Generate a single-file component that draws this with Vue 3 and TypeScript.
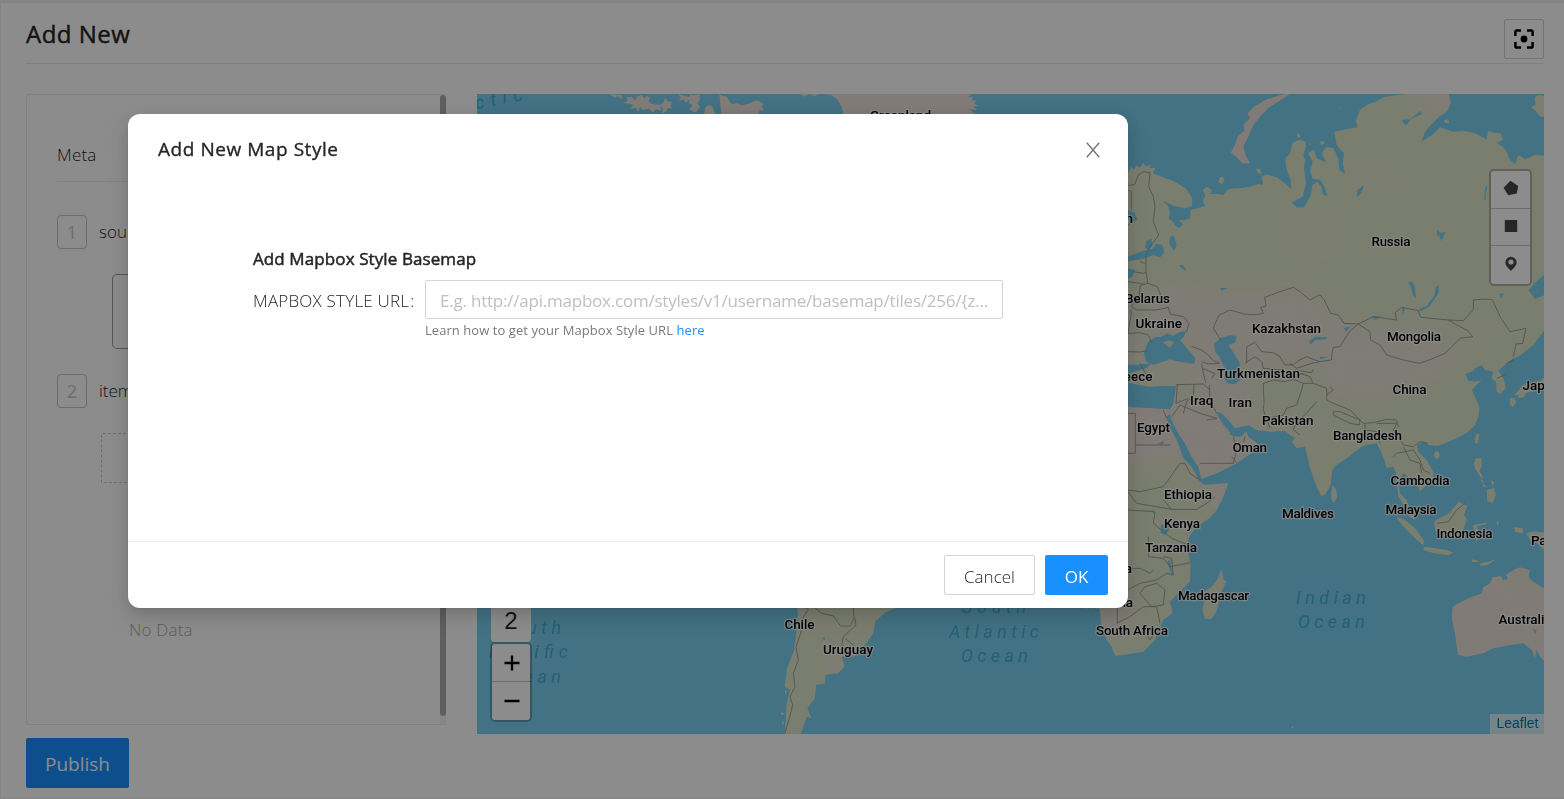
<script setup lang="ts">
interface MapLabel {
  text: string
  x: number
  y: number
  w: number
}

const countries: MapLabel[] = [
  { text: 'Russia', x: 1371.5, y: 246.4, w: 39 },
  { text: 'Belarus', x: 1125, y: 303.4, w: 45 },
  { text: 'Sweden', x: 1085, y: 223, w: 48 },
  { text: 'Ukraine', x: 1135.5, y: 328, w: 46.5 },
  { text: 'Kazakhstan', x: 1252, y: 333.4, w: 69 },
  { text: 'Mongolia', x: 1387, y: 341, w: 54 },
  { text: 'Greece', x: 1110, y: 381, w: 42.5 },
  { text: 'Turkmenistan', x: 1217, y: 378, w: 83 },
  { text: 'China', x: 1392.5, y: 394.4, w: 34 },
  { text: 'Japan', x: 1522.5, y: 390.4, w: 37 },
  { text: 'Iraq', x: 1190, y: 405, w: 23.5 },
  { text: 'Iran', x: 1228.5, y: 407, w: 23.5 },
  { text: 'Pakistan', x: 1262, y: 425, w: 51.5 },
  { text: 'Egypt', x: 1137, y: 432, w: 33 },
  { text: 'Bangladesh', x: 1333, y: 440.4, w: 69 },
  { text: 'Oman', x: 1232.5, y: 452, w: 34.5 },
  { text: 'Cambodia', x: 1390.5, y: 485, w: 59 },
  { text: 'Ethiopia', x: 1164, y: 499, w: 48 },
  { text: 'Malaysia', x: 1385.5, y: 514, w: 51 },
  { text: 'Maldives', x: 1282, y: 518, w: 52 },
  { text: 'Kenya', x: 1164, y: 528, w: 36 },
  { text: 'Indonesia', x: 1436.5, y: 538, w: 56 },
  { text: 'Papua', x: 1531, y: 545, w: 37 },
  { text: 'Tanzania', x: 1145, y: 552, w: 52 },
  { text: 'Angola', x: 1089, y: 573, w: 43 },
  { text: 'Madagascar', x: 1178, y: 600, w: 71 },
  { text: 'Namibia', x: 1085, y: 607, w: 48 },
  { text: 'Australia', x: 1498.5, y: 624.4, w: 53 },
  { text: 'South Africa', x: 1096, y: 635, w: 72 },
  { text: 'Chile', x: 784.5, y: 629, w: 30 },
  { text: 'Uruguay', x: 823, y: 654, w: 50 },
  { text: 'Greenland', x: 870, y: 120.4, w: 61 },
]

const oceans: MapLabel[] = [
  { text: 'Indian', x: 1296, y: 604.4, w: 70 },
  { text: 'Ocean', x: 1298, y: 628.4, w: 67 },
  { text: 'South', x: 962, y: 613, w: 64 },
  { text: 'Atlantic', x: 949, y: 638, w: 90 },
  { text: 'Ocean', x: 961, y: 662, w: 67 },
  { text: 'South', x: 498, y: 634, w: 63 },
  { text: 'Pacific', x: 489, y: 658, w: 79 },
  { text: 'Ocean', x: 494, y: 683, w: 67 },
]
</script>

<template>
  <div class="page">
    <header class="page-head">
      <h1>Add New</h1>
      <button class="full-btn" aria-label="Fullscreen">
        <svg width="22" height="22" viewBox="0 0 22 22">
          <path d="M2.400 8V3.800a1.400 1.400 0 0 1 1.400-1.400H8M14 2.400h4.200a1.400 1.400 0 0 1 1.400 1.400V8M19.600 14v4.200a1.400 1.400 0 0 1-1.400 1.400H14M8 19.600H3.800a1.400 1.400 0 0 1-1.400-1.400V14" fill="none" stroke="#000" stroke-width="2.500" />
          <circle cx="11" cy="11" r="3.400" />
        </svg>
      </button>
    </header>

    <main class="content">
      <section class="panel">
        <div class="panel-body">
          <div class="tab">Meta</div>
          <div class="row"><span class="num">1</span><span class="name">source</span></div>
          <div class="source-box"></div>
          <div class="row second"><span class="num">2</span><span class="name">items</span></div>
          <div class="drop-box"></div>
          <div class="no-data">No Data</div>
        </div>
        <div class="track"><div class="thumb"></div></div>
      </section>

      <section class="map">
        <svg class="world" width="1067" height="640" viewBox="477 94 1067 640">
          <defs>
            <filter id="soft" x="-30%" y="-30%" width="160%" height="160%"><feGaussianBlur stdDeviation="24" /></filter>
            <clipPath id="mainland">
              <path d="M-120 240L10 262 24 250 34 230 42 240 50 226 60 234 70 218 78 230 92 222 90 234 106 234 99 250 130 262 165 275 200 298 217 325 216 348 195 355 160 347 130 332 146 352 150 368 146 385 160 395 166 408 180 413 188 402 176 390 195 390 210 384 212 360 235 354 257 347 248 332 256 318 248 300 262 290 276 300 270 312 292 312 310 314 325 298 345 295 365 294 390 290 415 282 430 285 424 262 440 253 470 262 495 280 513 297 512 270 500 240 496 205 510 190 518 158 535 150 555 153 558 170 550 195 556 212 552 230 558 280 548 320 515 338 530 352 552 352 570 320 578 284 592 276 604 290 608 313 622 318 614 290 600 270 578 266 570 240 578 215 565 190 582 178 590 205 618 217 605 190 620 170 640 175 655 205 658 240 675 252 668 218 672 190 650 165 643 125 680 118 712 112 708 90 720 60 745 42 765 36 790 22 830 15 880 10 985 10 992 40 982 64 955 82 930 108 915 126 905 155 940 132 960 112 1000 125 1030 122 1065 130 1100 148 1105 122 1120 128 1142 130 1150 150 1130 158 1150 172 1162 188 1168 208 1185 222 1195 195 1215 208 1245 195 1280 198 1280 548 1250 573 1226 600 1245 627 1280 612 1280 712 1240 765 1195 800 1180 805 1160 820 1135 842 1150 865 1158 895 1140 912 1130 905 1128 875 1115 865 1120 845 1095 840 1085 825 1065 835 1060 842 1036 853 1045 872 1065 875 1085 870 1070 884 1056 900 1065 920 1078 950 1075 980 1065 1005 1045 1025 1010 1045 975 1060 955 1068 925 1065 910 1055 890 1065 895 1085 920 1110 942 1150 935 1175 910 1195 900 1205 895 1190 880 1175 850 1150 835 1175 840 1210 860 1230 875 1268 885 1290 868 1280 850 1245 836 1220 830 1180 828 1150 820 1130 800 1134 795 1115 785 1090 770 1060 740 1065 725 1070 700 1090 680 1105 650 1125 637 1140 632 1185 615 1215 603 1217 590 1190 570 1135 555 1070 530 1075 515 1055 525 1045 510 1035 495 1023 450 1025 410 1020 385 1005 345 1015 325 990 305 970 290 965 295 980 310 1005 325 1020 330 1035 345 1040 365 1040 378 1025 385 1040 405 1055 415 1065 400 1085 350 1120 300 1145 245 1167 240 1150 235 1130 215 1100 195 1060 175 1030 155 990 150 970 138 980 150 1015 170 1050 190 1105 215 1130 240 1175 255 1185 325 1180 310 1220 290 1260 270 1284 230 1310 207 1340 203 1380 212 1420 210 1475 175 1510 150 1535 158 1570 130 1590 120 1615 105 1650 70 1685 30 1692 -15 1698 -25 1670 -40 1650 -55 1615 -60 1560 -90 1520 -120 1300Z" />
            </clipPath>
            <clipPath id="australia">
              <path d="M998 1550L1015 1540 1045 1525 1085 1510 1090 1492 1110 1480 1118 1462 1142 1458 1150 1470 1164 1468 1158 1454 1172 1445 1184 1438 1200 1432 1230 1440 1225 1460 1240 1475 1280 1500 1280 1722 1260 1700 1250 1680 1245 1705 1235 1680 1210 1660 1170 1665 1120 1675 1090 1690 1040 1700 1015 1695 1010 1670 1005 1630 995 1585Z" />
            </clipPath>
          </defs>
          <rect x="477" y="94" width="1067" height="640" class="water" />

          <g transform="translate(1120 90) scale(.33333)">
            <g clip-path="url(#mainland)">
              <rect x="-150" width="1450" height="1750" class="green" />
              <g class="sand" filter="url(#soft)">
                <ellipse cx="580" cy="445" rx="80" ry="65" opacity=".3" />
                <ellipse cx="750" cy="275" rx="100" ry="35" opacity=".2" />
                <path d="M160 560L300 600 560 600 700 700 900 720 1040 770 980 860 780 930 640 920 560 820 400 850 430 1030 240 1000 200 770 60 690Z" opacity=".65" />
                <path d="M640 810L820 800 960 830 840 900 680 920ZM1040 680L1120 720 1060 770ZM480 610L590 640 600 700 520 700Z" opacity=".5" />
                <path d="M-80 900L150 910 260 980 460 1050 370 1140 240 1160 150 1090 -80 1160Z" />
                <path d="M-100 690L50 640 260 860 100 880-100 850Z" opacity=".5" />
                <path d="M480 980L620 1000 600 1140 540 1080Z" opacity=".5" />
                <ellipse cx="950" cy="20" rx="70" ry="50" opacity=".8" />
                <path d="M-100 1480L60 1510 20 1640-100 1620Z" opacity=".7" />
                <ellipse cx="290" cy="1200" rx="35" ry="60" />
              </g>
            </g>
            <g clip-path="url(#australia)">
              <rect x="980" y="1400" width="320" height="340" class="sand" />
              <path d="M1120 1490L1280 1440V1500H1180Z" class="green" filter="url(#soft)" opacity=".6" />
            </g>

            <!-- islands -->
            <path class="sand" d="M505 8L440 28 402 50 382 70 390 85 370 105 374 120 352 140 345 165 332 188 350 202 366 220 390 220 378 198 370 170 386 138 400 105 420 80 445 53 475 35 515 8Z" />
            <path class="green" d="M298 262l10-2 6 10-8 12-10-4ZM408 236l10 0 8 14-10 2ZM530 132l8-2 4 10-8 4ZM972 90l12-2 4 10-12 2ZM1245 22l12-8 23 6v60l-20 0-12-16-14-12 12-8ZM568 160l8 2-4 8ZM598 155l12-2 4 8-10 4ZM655 52l4-2 2 6Z" />
            <path class="green" d="M638 1186l10 10 4 26-10 16-8-10 0-22ZM945 1084l12 2 2 14-10 8-8-10ZM1070 1030l8 2-4 28-8 0-2-14ZM1066 1106l18-2 2 24-8 14 14 22-10-2-16-24-4-16ZM1080 1160l10 14-4 4ZM1100 1200l22-6 6 22-10 24-16-6ZM1088 1180l12 10-10 2ZM1112 1170l10 6-4 14ZM1170 924l14 0 4 14-10 14-8-8ZM1192 910l26 0-6 12-16 2ZM1184 914l26-30 50-12 20-14v28l-40 18-50 12Z" />
            <path class="green" d="M832 1282l20 6 36 30 24 34-2 14-22-18-38-38-20-26ZM912 1370l30 4 36 6 22 8-16 8-42-6-32-10ZM944 1292l40-20 34-38 8 6 16 8-10 26 8 14-8 26-18 30-30-2-34-10-6-20ZM1060 1306l38-8 4 4-30 6 4 14 14 10-12 0-10 28 0-30-8-14ZM1056 1408l20 4-2 4-18 0ZM1080 1420l22-4 26-8-22 16-24 4ZM1182 1312l26 2 2 16-24-4ZM1130 1298l6-6-2 20ZM1220 1330l20-6 40 4v60l-26-26-22-10-12-18Z" />
            <path class="green" d="M305 1440l6 30 8 4-14 30-16 62-16 22-18-2-8-26 6-28-2-26 24-16 18-24 6-18Z" />
            <path class="green" d="M517 1907l5 6-9 1Z" />

            <!-- seas and lakes -->
            <path class="water" d="M84 755L105 742 125 740 142 730 158 738 176 728 198 722 192 740 180 750 200 775 226 805 222 822 170 814 150 808 130 815 100 824 78 814 72 790ZM282 762L300 745 330 736 350 738 345 758 325 765 345 795 360 820 355 850 362 868 345 883 322 880 312 862 314 835 298 800 286 785ZM-30 820L40 825 95 820 78 835 28 850 30 880 85 890 125 888 168 888 160 940 150 958 100 955 40 952-60 940Z" />
            <path class="land" d="M128 757l20-6 14 6-12 16Z" />
            <path class="water" d="M24 360l20 8 8 20-28 20ZM24 500l40-16 34-8 10-14 18 2 8 24-14 14-20-6-30 10-46 8ZM80 452l14-6 4 22-14 12-10-8ZM150 440l10-4 10 30-8 16-14-20ZM176 524l14 2 10 16-14-6ZM24 535l22 6-10 20-12 6ZM895 658l24-10 24-30 4-28 10-4-2 26-26 36-26 16ZM864 578l10-4 10 12 4 40-10-12-6-26ZM566 754l20-14 36 2-2 6-34 2-14 14ZM952 420l10 8 14-2-8 20-4 8-6-16-8-2ZM712 300l20-14-8 22-12 14ZM846 90l24-2 32-26 4 10-34 16-12 18-10-6ZM565 178l10-20 10 14-2 10ZM1096 290l6-2-6 30 2 16-6-8ZM670 714l22-4-14 14ZM755 678l30 2-22 10ZM845 650l10 4-6 22ZM1138 610l14 2-10 12ZM600 800l24 2-24 6ZM300 594l22 0-16 8ZM112 1062l20-10-4 12ZM122 1306l24-6 0 22-10 14-14-8ZM142 1416l8-6 8 40-2 10ZM160 1290l6 14-4 4ZM98 1250l4 22-4-4ZM1238 1618l12 2-4 12Z" />

            <!-- borders -->
            <g class="border">
              <path d="M24 286L44 284 55 255 70 245 90 248 86 290 100 320 105 350 100 395 116 435 90 470 78 495 78 545 84 580M24 300L34 304V360M24 575L50 578 70 584 84 580 112 590 122 615M60 588L58 620 34 650 50 660 110 660 145 652 150 672 190 680 207 700 200 725M32 660L34 670 24 730 60 728 84 734 96 760M24 785L60 786 84 782M40 545L70 550 78 548M60 515L74 520M60 590L70 580M85 865L60 820M245 815L265 822 300 820M215 770L240 778 262 792 280 812 298 818M246 835L285 850 275 865M245 820L250 850 258 880M168 884L250 882 270 900M172 884L168 940 205 925M222 882L220 920 200 935 190 970M268 885L270 930 290 970M155 980L180 945 240 970 290 985" />
              <path d="M290 690L298 675 330 660 372 672 405 674 430 670 422 652 438 648 434 622 480 605 520 592 540 605 570 630 600 614 612 628 632 670 655 675 672 700 715 702 688 725 660 770 640 772 636 790 634 810 598 815 560 800 535 812 520 825 495 825 478 798 460 788 425 785 405 757 380 770M380 770V816M290 690L280 715 305 755M715 702L760 680 830 690 825 668 845 652 895 662 902 682 985 690 1010 705 1040 720 1058 740 1020 745 975 790 940 805 900 820 850 810 800 795 780 765 752 750 750 725 715 702M985 690L1030 692 1060 660 1060 630 1095 627 1118 630 1140 680 1170 725 1218 715 1208 760 1188 762 1180 800M1180 810L1160 820M1130 865L1155 855" />
              <path d="M375 820L405 800 425 815 430 835 485 840 525 860 550 850M430 880L432 940 430 960 440 985 450 1015M430 880L460 870 495 875 520 868 550 880 545 900 530 945 500 955 490 975 440 985M550 880L580 880 620 895 620 930 640 940 690 960 730 1000 760 998 800 988 830 990 835 1010M540 850L570 860 578 878M540 1035L520 1020 530 995 560 970 590 935M640 965L660 965 720 990 718 1005 690 1000 640 975ZM735 1000L735 1020 770 1025 780 1060M770 1000L830 1000M830 1000L820 1020 850 1065 880 1070 900 1055 925 1060M820 1100L830 1090 855 1085 880 1080 900 1110 910 1140 930 1150M850 1070L870 1110 900 1120 905 1150M510 820L530 835 575 820 600 815M525 840L575 848 580 838M620 915L640 900 630 890M24 970L46 970V1090H24M46 1065H152M130 960L140 985M260 990L290 985M340 1040L350 1080 340 1120 240 1120M335 1100L350 1118M375 1040L370 1058M24 1200L60 1205 130 1190 145 1170 180 1120 195 1120 210 1150 240 1170M24 1205L50 1240 155 1258 130 1230M155 1258L230 1258 260 1240 285 1220M105 1265L100 1300 155 1345 205 1365M24 1260L105 1265M85 1340V1400L130 1405 150 1430 212 1418M24 1435L60 1435 90 1450 100 1440M130 1400L155 1405 160 1455 140 1450 110 1470 60 1480 24 1500M75 1490L110 1480 135 1500 130 1545 95 1550 60 1510 75 1490M-8 1540V1600M-10 1600L30 1580 70 1550 110 1550 120 1600M80 1635L90 1650 100 1635M950 1300L985 1295 1010 1260 1035 1240" />
            </g>
          </g>

          <!-- arctic strip -->
          <g transform="translate(470 80) scale(.34439 .33333)">
            <path class="sand" d="M405 42L420 54 428 48 440 58 442 45ZM446 68L458 62 454 52 470 50 480 62 484 50 498 45 508 56 512 48 524 52 518 64 528 72 550 74 556 92 540 88 530 98 520 86 500 90 494 82 488 96 482 84 466 86 474 74ZM550 76L562 68 566 52 574 64 586 66 582 78 588 86 574 84 570 96 556 100 560 86ZM605 42L612 54 606 62 622 58 626 68 640 56 634 70 648 74 636 88 656 98 668 80 660 70 668 56 666 42 652 46 640 42 636 52ZM680 102L684 82 694 74 704 80 712 102ZM724 42L730 102H836L840 92 854 90 846 80 852 72 838 62 826 62 812 70 790 76 776 70 760 72 752 62 746 50 734 48ZM958 42L972 50 985 42 1000 48 1015 42H1456L1446 52 1462 52 1456 60 1472 62 1464 70 1476 78 1460 80 1474 90 1452 88 1464 102H1085L1078 78 1066 58 1048 44 1015 42Z" />
          </g>

          <!-- South America -->
          <g transform="translate(740 590) scale(.33333)">
            <path class="green" d="M172 30L175 60 170 120 162 180 140 240 134 290 150 300 140 340 134 440H180L200 380 215 385 202 355 225 325 228 285 255 280 256 255 295 250 314 228 305 200 342 200 375 165 400 130 405 95 435 68 475 50Z" />
            <path class="sand" d="M235 205L290 195 314 228 295 250 240 250ZM170 50H205L180 120Z" opacity=".6" />
            <path class="sand" d="M134 300l6 2-2 20ZM122 366l14 6-12 4ZM126 392l6 4-4 16Z" />
            <path class="border" d="M190 50L205 58 188 85 182 130 168 170 175 210 160 250 165 290 150 320 158 345 148 385 135 430M225 55L245 70 280 78 302 108 330 108 342 85 340 50M345 85L348 105 310 140 305 170M315 145L345 170" />
            <path class="water" d="M246 146l8-6 2 10Z" />
          </g>

          <g class="ocean-text">
            <text v-for="(o, i) in oceans" :key="i" :x="o.x" :y="o.y" :textLength="o.w">{{ o.text }}</text>
            <text x="476" y="109" textLength="48" transform="rotate(-11 477 109)">ctic</text>
          </g>
          <g class="country-text">
            <text v-for="c in countries" :key="c.text" :x="c.x" :y="c.y" :textLength="c.w">{{ c.text }}</text>
          </g>
        </svg>

        <div class="draw-tools">
          <button aria-label="Draw polygon"><svg width="16" height="16" viewBox="0 0 16 16"><path d="M7.400.800L15.200 6 13.800 13.400 5.200 15.200.600 7.800Z" /></svg></button>
          <button aria-label="Draw rectangle"><svg width="16" height="16" viewBox="0 0 16 16"><path d="M1.800 2h12.400v12H1.800Z" /></svg></button>
          <button aria-label="Draw marker"><svg width="16" height="16" viewBox="0 0 16 16"><path fill-rule="evenodd" d="M8 .800a5.600 5.600 0 0 1 5.600 5.700c0 3.300-2.800 5-5.600 8.600C5.200 11.500 2.400 9.800 2.400 6.500A5.600 5.600 0 0 1 8 .800ZM8 3.400a2.600 2.600 0 1 0 0 5.200 2.600 2.600 0 0 0 0-5.200Z" /></svg></button>
        </div>
        <div class="zoom-level">2</div>
        <div class="zoom-tools">
          <button aria-label="Zoom in"><svg width="16" height="16" viewBox="0 0 16 16"><path d="M0.500 8h15M8 .500v15" stroke="#000" stroke-width="2.300" /></svg></button>
          <button aria-label="Zoom out"><svg width="16" height="16" viewBox="0 0 16 16"><path d="M0.500 8h15" stroke="#000" stroke-width="2.300" /></svg></button>
        </div>
        <div class="credit">Leaflet</div>
      </section>
    </main>

    <button class="publish">Publish</button>

    <div class="mask">
      <div class="modal" role="dialog">
        <div class="modal-head">
          <h2>Add New Map Style</h2>
          <svg class="close" width="16" height="16" viewBox="0 0 16 16"><path d="M1.800.800L14.200 15.200M14.200.800L1.800 15.200" fill="none" stroke="#7a7a7a" stroke-width="1.500" /></svg>
        </div>
        <div class="modal-body">
          <h3>Add Mapbox Style Basemap</h3>
          <div class="field">
            <span class="label">MAPBOX STYLE URL<i>:</i></span>
            <div class="input"><span>E.g. http://api.mapbox.com/styles/v1/username/basemap/tiles/256/{z...</span></div>
          </div>
          <p class="hint">Learn how to get your Mapbox Style URL <a>here</a></p>
        </div>
        <div class="modal-foot">
          <button class="btn cancel">Cancel</button>
          <button class="btn ok">OK</button>
        </div>
      </div>
    </div>
  </div>
</template>

<style>
html,
body {
  margin: 0;
  overflow: hidden;
}
</style>

<style scoped>
* {
  box-sizing: border-box;
}
.page {
  position: relative;
  width: 1564px;
  height: 799px;
  padding: 3px 20px 0 26px;
  box-shadow: inset 1px 3px 0 #f0f0f0, inset 0 -1px 0 #f0f0f0;
  background: #fff;
  overflow: hidden;
  font-family: "Open Sans", "Noto Sans", sans-serif;
  font-size: 17px;
  font-weight: 300;
  color: #262626;
}
button {
  font: inherit;
  padding: 0;
  margin: 0;
  border: 0;
  display: flex;
  align-items: center;
  justify-content: center;
}
h1,
h2,
h3,
p {
  margin: 0;
}
.page-head {
  display: flex;
  justify-content: space-between;
  height: 61px;
  border-bottom: 1px solid #e8e8e8;
}
h1 {
  font-size: 24px;
  line-height: 62px;
  font-weight: 400;
  letter-spacing: 0.5px;
  -webkit-text-stroke: 0.4px #1c1c1c;
}
.full-btn {
  width: 40px;
  height: 40px;
  margin-top: 16px;
  border: 1px solid #d4d4d4;
  border-radius: 2px;
  background: #fff;
}
.content {
  display: flex;
  gap: 31px;
  margin-top: 30px;
  height: 640px;
}
.panel {
  display: flex;
  justify-content: space-between;
  width: 420px;
  height: 631px;
  border: 1px solid #ebebeb;
  border-right: 0;
  border-radius: 3px 0 0 3px;
}
.panel-body {
  width: 412px;
  padding: 33px 30px 0;
}
.tab {
  height: 54px;
  line-height: 53px;
  border-bottom: 1px solid #ececec;
  letter-spacing: 0.2px;
}
.row {
  display: flex;
  align-items: center;
  gap: 12px;
  height: 34px;
  margin-top: 33px;
}
.row.second {
  margin-top: 25px;
}
.name {
  line-height: 32px;
}
.num {
  width: 30px;
  height: 34px;
  line-height: 33px;
  border: 1px solid #c4c4c4;
  border-radius: 4px;
  text-align: center;
  font-size: 18px;
  font-weight: 400;
  color: #c8c8c8;
}
.source-box {
  height: 75px;
  margin: 25px 0 0 55px;
  border: 1px solid #9c9c9c;
  border-radius: 5px;
}
.drop-box {
  height: 50px;
  margin: 25px 0 0 44px;
  border: 1px dashed #c8c8c8;
  border-radius: 2px;
}
.no-data {
  margin: 135px 0 0 72px;
  line-height: 24px;
  letter-spacing: 0.2px;
  color: #acacac;
}
.track {
  width: 6px;
  background: #f5f5f5;
}
.thumb {
  height: 621px;
  border-radius: 3px;
  background: #acacac;
}
.map {
  position: relative;
  width: 1067px;
  height: 640px;
  overflow: hidden;
}
.world {
  display: block;
}
.water {
  fill: #78cfee;
}
.green,
.land {
  fill: #dfe6ca;
}
.sand {
  fill: #eae1d9;
}
.border {
  fill: none;
  stroke: #96958f;
  stroke-width: 2.6;
  stroke-linejoin: round;
}
.country-text {
  font: 500 13.5px Roboto, sans-serif;
  fill: #000;
  stroke: #fff;
  stroke-opacity: 0.7;
  stroke-width: 2.5px;
  stroke-linejoin: round;
  paint-order: stroke;
}
.ocean-text {
  font: italic 400 18px Roboto, sans-serif;
  fill: #42b0d4;
}
.draw-tools,
.zoom-tools {
  position: absolute;
  width: 43px;
  border: 2px solid rgba(0, 0, 0, 0.22);
  border-radius: 5px;
  background-clip: padding-box;
  overflow: hidden;
}
.draw-tools {
  left: 1012px;
  top: 75px;
  height: 117px;
}
.draw-tools button,
.zoom-tools button {
  width: 100%;
  height: 38px;
  background: #fff;
  border-bottom: 1px solid #c8c8c8;
}
.draw-tools button {
  padding: 0 0 3px 1px;
}
.draw-tools svg {
  fill: #464646;
}
.draw-tools button:nth-child(2) {
  height: 37px;
}
.zoom-level {
  position: absolute;
  left: 14px;
  top: 508px;
  width: 40px;
  height: 40px;
  border-radius: 4px;
  background: #fff;
  font: 24px/38px "Liberation Sans", Arial, sans-serif;
  text-align: center;
}
.zoom-tools {
  left: 13px;
  top: 548px;
  width: 42px;
  height: 80px;
}
.zoom-tools button {
  padding-left: 1px;
}
.zoom-tools button:last-child,
.draw-tools button:last-child {
  border-bottom: 0;
}
.credit {
  position: absolute;
  right: 0;
  bottom: 0;
  width: 54px;
  height: 20px;
  padding-left: 1px;
  background: rgba(255, 255, 255, 0.7);
  font: 14px/19px "Liberation Sans", Arial, sans-serif;
  color: #0078a8;
  text-align: center;
}
.publish {
  width: 103px;
  height: 50px;
  margin-top: 4px;
  padding-top: 2px;
  border-radius: 2px;
  background: #1890ff;
  color: #fff;
  font-size: 19px;
  font-weight: 400;
}
.mask {
  position: absolute;
  inset: 0;
  padding: 114px 0 0 128px;
  background: rgba(0, 0, 0, 0.45);
}
.modal {
  display: flex;
  flex-direction: column;
  width: 1000px;
  height: 494px;
  border-radius: 12px;
  background: #fff;
  box-shadow: 0 3px 6px -4px rgba(0, 0, 0, 0.12), 0 6px 16px 0 rgba(0, 0, 0, 0.14), 0 9px 28px 8px rgba(0, 0, 0, 0.06);
}
.modal-head {
  display: flex;
  align-items: center;
  justify-content: space-between;
  height: 72px;
  padding: 0 27px 0 30px;
}
h2 {
  font-size: 19px;
  line-height: 70px;
  height: 72px;
  font-weight: 400;
  letter-spacing: 0.55px;
  -webkit-text-stroke: 0.35px #262626;
}
.modal-body {
  flex: 1;
  padding: 58px 125px 0;
}
h3 {
  font-size: 17px;
  line-height: 30px;
  font-weight: 400;
  letter-spacing: 0.1px;
  -webkit-text-stroke: 0.5px #262626;
}
.field {
  display: flex;
  align-items: center;
  margin-top: 6px;
}
.label {
  width: 172px;
  padding-top: 1px;
  font-size: 17px;
  letter-spacing: 0.22px;
  white-space: nowrap;
}
.label i {
  font-style: normal;
  margin-left: 1px;
}
.input {
  width: 578px;
  height: 39px;
  padding: 0 14px;
  border: 1px solid #d4d4d4;
  border-radius: 2px;
  line-height: 39px;
  font-size: 17px;
  letter-spacing: -0.22px;
  font-weight: 400;
  color: #bfbfbf;
  white-space: nowrap;
}
.hint {
  margin-left: 172px;
  font-size: 13px;
  letter-spacing: 0.06px;
  font-weight: 400;
  line-height: 23px;
  color: #7a7a7a;
}
.hint a {
  color: #1890ff;
}
.modal-foot {
  display: flex;
  justify-content: flex-end;
  gap: 10px;
  height: 67px;
  padding: 13px 20px 0;
  border-top: 1px solid #ececec;
}
.btn {
  height: 40px;
  padding-top: 2px;
  border-radius: 2px;
  font-size: 17px;
}
.cancel {
  width: 91px;
  border: 1px solid #d4d4d4;
  background: #fff;
  color: #262626;
}
.ok {
  width: 63px;
  background: #1890ff;
  color: #fff;
  font-weight: 400;
}
</style>
